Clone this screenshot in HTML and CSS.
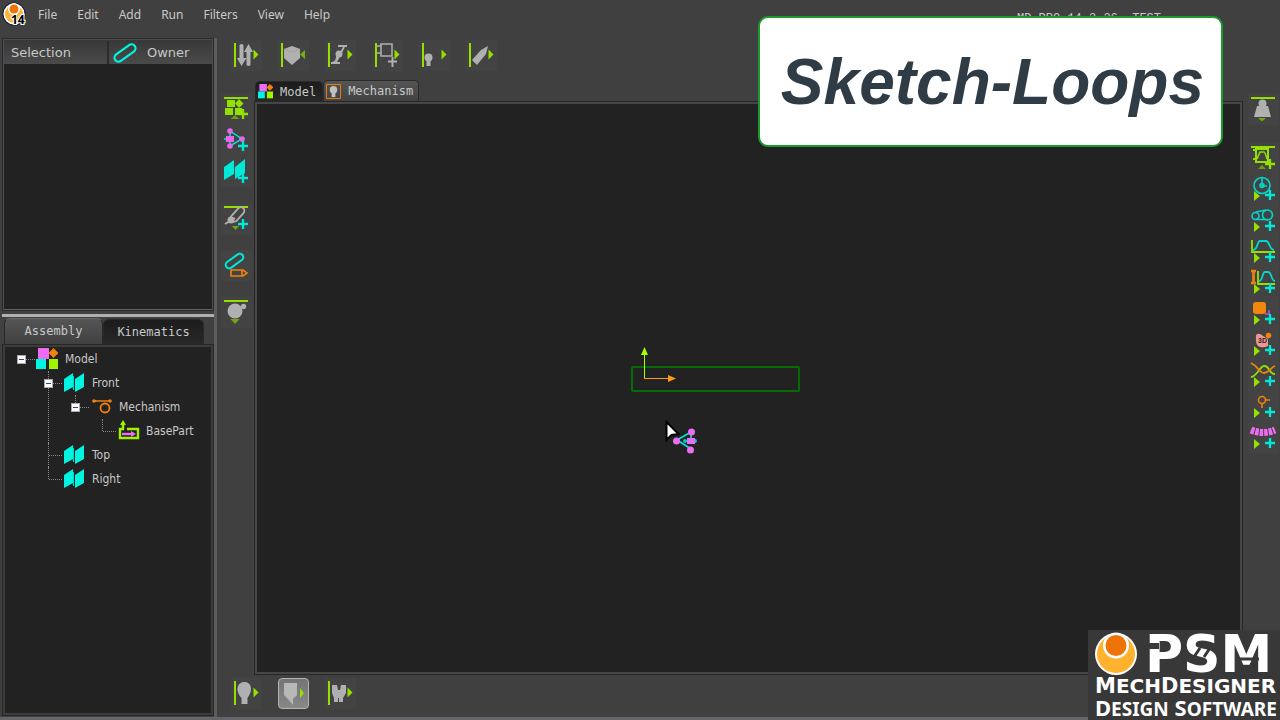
FILE: index.html
```html
<!DOCTYPE html>
<html lang="en">
<head>
<meta charset="utf-8">
<title>MechDesigner</title>
<link rel="stylesheet" href="styles.css">
</head>
<body>
<svg class="defs" aria-hidden="true">
  <symbol id="bar-v" viewBox="0 0 31 31"><path d="M3 3h2v24H3z" fill="#94e000"/></symbol>
  <symbol id="bar-h" viewBox="0 0 31 31"><path d="M3 3h24v2H3z" fill="#94e000"/></symbol>
  <symbol id="go" viewBox="0 0 31 31"><path d="M22.500 9.500l5 5-5 5z" fill="#94e000"/></symbol>
  <symbol id="play" viewBox="0 0 31 31"><path d="M6 17l6 5-6 5z" fill="#94e000"/></symbol>
  <symbol id="plus" viewBox="0 0 31 31"><path d="M22 18v10M17 23h10" fill="none" stroke="currentColor" stroke-width="2.300"/></symbol>
  <symbol id="plane" viewBox="0 0 22 22"><path d="M1 7L10 1v14L1 20zM12 7l9-6v14l-9 5z" fill="#00f5e0"/><path d="M10.500 4v14" stroke="#00d8c8"/></symbol>
  <symbol id="model" viewBox="0 0 22 22"><path d="M2 0h11v11H2z" fill="#ee6cf2"/><path d="M17.500 0l5 5-5 5-5-5z" fill="#ef820d"/><path d="M0 11h10v10H0z" fill="#00f5e0"/><path d="M13 11h9v10h-9z" fill="#9ff500"/></symbol>
</svg>

<header class="menubar">
  <svg class="app-icon" viewBox="0 0 24 24" role="img" aria-label="MechDesigner 14">
    <circle cx="12" cy="12" r="11.500" fill="#1b1b35"/><circle cx="12" cy="12" r="10.500" fill="#fff"/><circle cx="12" cy="12" r="9" fill="#fdb338"/><circle cx="12" cy="7" r="6" fill="#fff"/><circle cx="12" cy="7" r="4.500" fill="#ee7408"/>
    <text class="app-version" x="9" y="22">14</text>
  </svg>
  <nav class="menu">
    <button>File</button><button>Edit</button><button>Add</button><button>Run</button><button>Filters</button><button>View</button><button>Help</button>
  </nav>
  <span class="app-title">MD PRO 14.3.26&nbsp; TEST</span>
</header>

<main class="shell">
  <aside class="sidebar">
    <section class="selection">
      <div class="selection-head">
        <span class="head-cell">Selection</span>
        <span class="head-cell owner"><svg class="owner-icon" viewBox="0 0 24 20"><rect x="0" y="6" width="24" height="8" rx="4" transform="rotate(-36 12 10)" fill="none" stroke="#00f5e0" stroke-width="2.200"/></svg>Owner</span>
      </div>
    </section>
    <div class="h-splitter"></div>
    <div class="side-tabs"><button class="side-tab active">Assembly</button><button class="side-tab">Kinematics</button></div>
    <section class="tree-panel">
      <ul class="tree">
        <li><div class="node"><button class="toggle" aria-label="Collapse Model"></button><svg class="node-icon"><use href="#model"/></svg>Model</div>
          <ul>
            <li><div class="node"><button class="toggle" aria-label="Collapse Front"></button><svg class="node-icon"><use href="#plane"/></svg>Front</div>
              <ul>
                <li><div class="node"><button class="toggle" aria-label="Collapse Mechanism"></button><svg class="node-icon" viewBox="0 0 22 22"><path d="M4 5h16" stroke="#ef820d" stroke-width="1.500"/><circle cx="4" cy="5" r="1.800" fill="#ef820d"/><circle cx="20" cy="5" r="1.800" fill="#ef820d"/><circle cx="15" cy="12" r="4.500" fill="none" stroke="#ef820d" stroke-width="1.800"/></svg>Mechanism</div>
                  <ul>
                    <li><div class="node"><svg class="node-icon" viewBox="0 0 22 22"><path d="M7 9H3v9h18V9H10M6 10V4" fill="none" stroke="#9ff500" stroke-width="2.400"/><path d="M6 0l3 5H3z" fill="#9ff500"/><path d="M5 14h12" stroke="#ee6cf2" stroke-width="2.400"/><path d="M14 11l5 3-5 3z" fill="#ee6cf2"/></svg>BasePart</div></li>
                  </ul>
                </li>
              </ul>
            </li>
            <li><div class="node"><svg class="node-icon"><use href="#plane"/></svg>Top</div></li>
            <li><div class="node"><svg class="node-icon"><use href="#plane"/></svg>Right</div></li>
          </ul>
        </li>
      </ul>
    </section>
  </aside>
  <div class="v-splitter"></div>

  <section class="workspace">
    <div class="toolbar">
      <button class="tool" aria-label="Sort"><svg viewBox="0 0 31 31"><use href="#bar-v"/><use href="#go"/><g fill="#b0b0b0"><path d="M8.500 5q2-2 4 0v13h3L10.500 26 6 18h2.500zM15.500 25V12H13l4.500-8 4.500 8h-2.500v13q-2 2-4 0z"/></g></svg></button>
      <button class="tool" aria-label="View"><svg viewBox="0 0 31 31"><use href="#bar-v"/><path d="M6 9l8-3 8 3v9l-8 7-8-7z" fill="#b0b0b0"/><path d="M6 9l8 3 8-3" fill="none" stroke="#a4a4a4"/><path d="M27 10l-5 4.500 5 4.500z" fill="#70b010"/></svg></button>
      <button class="tool" aria-label="Motion"><svg viewBox="0 0 31 31"><use href="#bar-v"/><use href="#go"/><path d="M6 23h9M13 6h9M11 22l8-15M7 23q5-1 5-7" fill="none" stroke="#b0b0b0" stroke-width="1.800"/><circle cx="14" cy="14" r="3.500" fill="#b0b0b0"/></svg></button>
      <button class="tool" aria-label="Add frame"><svg viewBox="0 0 31 31"><use href="#bar-v"/><use href="#go"/><path d="M9 4h11v12H9zM5 6h4M5 13h4" fill="none" stroke="#b0b0b0" stroke-width="1.500"/><path d="M20.500 17v10M16 21.500h9" stroke="#b0b0b0" stroke-width="2"/></svg></button>
      <button class="tool" aria-label="Part display"><svg viewBox="0 0 31 31"><use href="#bar-v"/><use href="#go"/><circle cx="9.500" cy="17.500" r="4" fill="#b0b0b0"/><path d="M7.500 18h4v8h-4z" fill="#b0b0b0"/></svg></button>
      <button class="tool" aria-label="Pen"><svg viewBox="0 0 31 31"><use href="#bar-v"/><use href="#go"/><path d="M6 20L15 10l7-4-2 8L11 25z" fill="#b0b0b0"/></svg></button>
    </div>

    <div class="stage">
      <div class="tool-column left">
        <div class="tool-group">
          <button class="tool" aria-label="Add model"><svg viewBox="0 0 31 31" class="lime"><use href="#bar-h"/><path d="M6 6h8v7H6zM18 5l4.500 4.500L18 14l-4-4.500zM4 14h8v7H4zM14 14h7v7h-7z" fill="#94e000"/><use href="#plus" y="-3"/><path d="M9.500 25l4.500-4 4.500 4z" fill="#6f9c14"/></svg></button>
          <button class="tool" aria-label="Add sketch"><svg viewBox="0 0 31 31" class="cyan"><path d="M9 6l12 8-12 7zM3 14h9" fill="none" stroke="#00e8d8" stroke-width="1.500"/><g fill="#e868ec"><circle cx="9" cy="6" r="2.800"/><circle cx="21" cy="14" r="2.800"/><circle cx="9" cy="21" r="2.800"/><path d="M5 11h8v6H5z"/></g><use href="#plus" y="-2"/></svg></button>
          <button class="tool" aria-label="Add plane"><svg viewBox="0 0 31 31" class="cyan"><path d="M3 11L13 4v14L3 24zM14 11l10-8v14l-10 6z" fill="#00e8d8"/><use href="#plus" y="-1"/></svg></button>
        </div>
        <div class="tool-group"><button class="tool" aria-label="Add part"><svg viewBox="0 0 31 31" class="cyan"><use href="#bar-h"/><rect x="8" y="8" width="17" height="7" rx="3.500" transform="rotate(-48 16.500 11.500)" fill="none" stroke="#b0b0b0" stroke-width="1.800"/><circle cx="10" cy="17" r="3.500" fill="#b0b0b0"/><path d="M4 21l10-6" stroke="#b0b0b0" stroke-width="2"/><use href="#plus" y="-2"/><path d="M11 23h7l-3.500 4z" fill="#70a714"/></svg></button></div>
        <div class="tool-group"><button class="tool" aria-label="Edit part"><svg viewBox="0 0 31 31"><rect x="3.500" y="7.500" width="20" height="7" rx="3.500" transform="rotate(-36 13.500 11)" fill="none" stroke="#00e8d8" stroke-width="2"/><path d="M10 20h12l4 3-4 3H10zM21 20v6" fill="none" stroke="#ef820d" stroke-width="1.600"/></svg></button></div>
        <div class="tool-group"><button class="tool" aria-label="Geometry"><svg viewBox="0 0 31 31"><use href="#bar-h"/><circle cx="14" cy="14" r="7.500" fill="#b0b0b0"/><circle cx="22.500" cy="9.500" r="2.700" fill="#b0b0b0"/><path d="M9.500 22h9L14 27z" fill="#70a714"/></svg></button></div>
      </div>

      <div class="center">
        <div class="doc-tabs">
          <button class="doc-tab"><svg class="doc-icon" viewBox="0 0 22 22"><use href="#model"/></svg>Model</button>
          <button class="doc-tab active"><svg class="doc-icon" viewBox="0 0 16 16"><path d="M.5.5h15v15H.5z" fill="none" stroke="#ef820d" stroke-width="1"/><circle cx="8" cy="6" r="4" fill="#c0c0c0"/><path d="M6 8h4v6H6z" fill="#c0c0c0"/></svg>Mechanism</button>
        </div>
        <div class="canvas">
          <svg class="drawing" viewBox="0 0 176 120" role="img" aria-label="Base part sketch">
            <rect x="5" y="22" width="167" height="24" rx="1" fill="none" stroke="#056b05" stroke-width="2"/>
            <path d="M17.500 33V10" stroke="#a6ff00"/><path d="M17.500 2l3.500 8h-7z" fill="#a6ff00"/>
            <path d="M17 33.500h24" stroke="#ff9a18"/><path d="M49 33.500l-8-3.500v7z" fill="#ff9a18"/>
            <path d="M64 87l-14 8 14 9M64 88v6M57 96h12" fill="none" stroke="#00e8e0" stroke-width="1.600"/><g fill="#00c8c8"><circle cx="58" cy="96" r="2"/><circle cx="68" cy="96" r="2"/></g>
            <g fill="#ee6cf2"><circle cx="64.500" cy="87" r="3.500"/><circle cx="49.500" cy="96" r="3.500"/><circle cx="63.500" cy="105" r="3.500"/><path d="M60 93h8v6h-8z"/></g>
            <path d="M39.500 77v18l5-5 7-1z" fill="#fff" stroke="#000" stroke-width="2"/>
          </svg>
        </div>
      </div>

      <div class="tool-column right">
        <div class="tool-group"><button class="tool" aria-label="Mass"><svg viewBox="0 0 31 31"><use href="#bar-h"/><circle cx="14.500" cy="9.500" r="4" fill="#b0b0b0"/><path d="M9 12h11l3 11H6z" fill="#b0b0b0"/><path d="M10 24h8l-4 3.500z" fill="#70a714"/></svg></button></div>
        <div class="tool-group">
          <button class="tool" aria-label="Add function block"><svg viewBox="0 0 31 31" class="lime"><use href="#bar-h"/><path d="M8 6h12v13H8zM5 7h3M5 16h3" fill="none" stroke="#94e000" stroke-width="2"/><path d="M9 16q3-7 3-7h4q1 0 3 7" fill="none" stroke="#94e000" stroke-width="1.600"/><use href="#plus" y="-2"/><path d="M10 26l4-4 4 4z" fill="#6f9c14"/></svg></button>
          <button class="tool" aria-label="Add clock"><svg viewBox="0 0 31 31" class="cyan"><g fill="none" stroke="#00d8cc" stroke-width="1.600"><circle cx="14" cy="11.500" r="8"/><circle cx="14" cy="11.500" r="2"/><path d="M14 4v8h5"/></g><use href="#play"/><use href="#plus" y="-2"/></svg></button>
          <button class="tool" aria-label="Add gearing"><svg viewBox="0 0 31 31" class="cyan"><g fill="none" stroke="#00d8cc" stroke-width="1.600"><circle cx="7.500" cy="11" r="3.500"/><circle cx="19.500" cy="10" r="5"/><path d="M8 7l10-2M8 14.500h12"/></g><use href="#play"/><use href="#plus" y="-2"/></svg></button>
          <button class="tool" aria-label="Add motion"><svg viewBox="0 0 31 31" class="cyan"><path d="M4 4v12h23" fill="none" stroke="#94e000" stroke-width="1.800"/><path d="M5 14c5 0 4-9 7-9h6c4 0 3 9 8 9" fill="none" stroke="#00d8cc" stroke-width="1.800"/><use href="#play"/><use href="#plus" y="-2"/></svg></button>
          <button class="tool" aria-label="Add motion path"><svg viewBox="0 0 31 31" class="cyan"><path d="M3 4h5M3 16h5M5.500 4v12" fill="none" stroke="#ef820d" stroke-width="2.600"/><path d="M10 4v13h17" fill="none" stroke="#94e000" stroke-width="1.800"/><path d="M11 14c4 0 3-9 6-9h3c4 0 3 9 7 9" fill="none" stroke="#00d8cc" stroke-width="1.800"/><use href="#play"/><use href="#plus" y="-2"/></svg></button>
          <button class="tool" aria-label="Add cam"><svg viewBox="0 0 31 31" class="cyan"><rect x="5" y="4" width="13" height="12" rx="3" fill="#f0860c"/><path d="M17 16h4v-4" fill="none" stroke="#b35bd0" stroke-width="1.500"/><use href="#play"/><use href="#plus" y="-2"/></svg></button>
          <button class="tool" aria-label="Add 3D cam"><svg viewBox="0 0 31 31" class="cyan"><path d="M8 6q3-3 7 1l5 3v7q-4 2-8 1-5-1-4-12z" fill="#e89890"/><circle cx="20.500" cy="6.500" r="2.800" fill="#ef820d"/><text class="tiny" x="10" y="14">3D</text><use href="#play"/><use href="#plus" y="-2"/></svg></button>
          <button class="tool" aria-label="Add curves"><svg viewBox="0 0 31 31" class="cyan"><path d="M3 17C9 17 12 5 17 6s4 8 10 8" fill="none" stroke="#94e000" stroke-width="1.800"/><path d="M3 3c7 3 8 10 13 10s6-5 11-7" fill="none" stroke="#ef820d" stroke-width="1.800"/><use href="#play"/><use href="#plus" y="-2"/></svg></button>
          <button class="tool" aria-label="Add point"><svg viewBox="0 0 31 31" class="cyan"><circle cx="14" cy="9" r="3.500" fill="none" stroke="#ef820d" stroke-width="1.600"/><path d="M18 9h4M14 13v4" stroke="#ef820d" stroke-width="1.600"/><use href="#play"/><use href="#plus" y="-2"/></svg></button>
          <button class="tool" aria-label="Add polyline"><svg viewBox="0 0 31 31" class="cyan"><path d="M3 8q12 5 24 0" fill="none" stroke="#ee6cf2" stroke-width="7" stroke-dasharray="3.500 1"/><use href="#play"/><use href="#plus" y="-2"/></svg></button>
        </div>
      </div>
    </div>

    <div class="toolbar bottom">
      <button class="tool" aria-label="Part"><svg viewBox="0 0 31 31"><use href="#bar-v"/><use href="#go"/><path d="M10.500 26v-6c-7-8-4-16 3-16s9 8 3 16v6z" fill="#b0b0b0"/></svg></button>
      <button class="tool pressed" aria-label="Solid" aria-pressed="true"><svg viewBox="0 0 31 31"><path d="M21 9l4 5-4 5z" fill="#94e000"/><path d="M5 4h13v12l-4 4v6l-5-6-4-4z" fill="#b8b8b8"/></svg></button>
      <button class="tool" aria-label="Assembly"><svg viewBox="0 0 31 31"><use href="#bar-v"/><use href="#go"/><path d="M7 7h5l1 5h2l1-5h5v8l-3 5v4h-4v-4h-1v4h-4v-4l-2-5z" fill="#b0b0b0"/></svg></button>
    </div>
  </section>
</main>

<h1 class="banner">Sketch-Loops</h1>
<div class="brand">
  <div class="brand-top">
    <svg class="brand-mark" viewBox="0 0 44 44"><circle cx="21" cy="22" r="21" fill="#fff"/><circle cx="21" cy="22" r="19" fill="#ffb22e"/><circle cx="21" cy="13.500" r="13" fill="#fff"/><circle cx="21" cy="13.500" r="10.500" fill="#ee7408"/></svg>
    <span class="brand-name">PSM<svg class="brand-cuts" viewBox="0 0 128 42"><path d="M0 11h14v6H0z" fill="#383838"/><path d="M47 28l8-12M59 25l8-12M91 27h23" fill="none" stroke="#383838" stroke-width="3"/></svg></span>
  </div>
  <span class="brand-line">M<small>ech</small>D<small>esigner</small></span>
  <span class="brand-line wide">D<small>esign</small> S<small>oftware</small></span>
</div>
</body>
</html>
```
FILE: styles.css
```css
* { box-sizing: border-box; }
body {
  margin: 0;
  height: 100vh;
  display: flex;
  flex-direction: column;
  overflow: hidden;
  background: #404040;
  border-bottom: 3px solid #666468;
  color: #c8c8c8;
  font-family: "Noto Sans", sans-serif;
  font-size: 12px;
}
button { margin: 0; padding: 0; border: 0; background: none; color: inherit; font: inherit; }
svg { display: block; }
.defs { position: absolute; width: 0; height: 0; }

.menubar { display: flex; align-items: center; height: 38px; padding: 0 119px 10px 2px; }
.app-icon { width: 24px; height: 24px; overflow: visible; }
.app-version { font: bold 12px "Open Sans", sans-serif; fill: #000; stroke: #fff; stroke-width: 2px; paint-order: stroke; }
.menu { display: flex; gap: 20px; margin-left: 12px; }
.app-title { margin-left: auto; padding-top: 10px; font: 12px "Liberation Mono", monospace; }

.shell { flex: 1; display: flex; min-height: 0; }
.sidebar { display: flex; flex-direction: column; width: 214px; padding: 0 0 0 2px; }
.selection { height: 273px; border: 2px solid #4c4c4c; border-bottom-color: #606060; background: #222; outline: 1px solid #2a2a2a; outline-offset: -1px; }
.selection-head { display: flex; height: 24px; padding-top: 1px; font: 13px "DejaVu Sans", sans-serif; background: linear-gradient(#383838, #4a4a4a); }
.head-cell { display: flex; align-items: center; width: 103px; padding-left: 7px; }
.head-cell.owner { flex: 1; gap: 10px; padding-left: 4px; border-left: 2px solid #2c2c2c; }
.owner-icon { width: 24px; height: 20px; }
.h-splitter { flex: none; height: 3px; margin-top: 3px; background: #b0b0b0; }
.side-tabs { display: flex; align-items: flex-end; height: 27px; padding: 1px 0 0 2px; font: 12px "DejaVu Sans Mono", monospace; }
.side-tab { height: 25px; width: 101px; border: 1px solid #282828; border-bottom: 0; border-radius: 6px 6px 0 0; background: linear-gradient(#1c1c1c, #282828); }
.side-tab.active { width: 99px; height: 26px; padding-bottom: 2px; background: linear-gradient(#555, #404040); border-top-color: #666; }
.tree-panel { flex: 1; margin-bottom: 1px; padding-left: 12px; border: 3px solid #3c3c3c; background: #222; outline: 1px solid #262626; outline-offset: -1px; }

.tree, .tree ul { margin: 0; padding: 0; list-style: none; }
.tree ul { padding-left: 27px; }
.tree li { position: relative; }
.node { position: relative; display: flex; align-items: center; height: 24px; padding-left: 19px; gap: 7px; font-family: "DejaVu Sans Condensed", "DejaVu Sans", sans-serif; font-stretch: condensed; }
.node::before { content: ""; position: absolute; left: 5px; width: 13px; border-top: 1px dotted #888; }
.tree ul > li::before { content: ""; position: absolute; top: 0; bottom: 0; left: 4px; border-left: 1px dotted #888; }
.tree ul > li:last-child::before { bottom: auto; height: 12px; }
.toggle { position: absolute; left: 0; width: 9px; height: 9px; background: linear-gradient(#2f4a80, #2f4a80) center / 5px 1px no-repeat #fff; border: 1px solid #aaa; }
.node-icon { width: 22px; height: 22px; overflow: visible; }

.v-splitter { width: 3px; background: #5c5c5c; }
.workspace { flex: 1; display: flex; flex-direction: column; min-width: 0; }
.toolbar { display: flex; gap: 16px; padding: 2px 0 9px 14px; }
.toolbar.bottom { padding: 3px 0 8px 14px; }
.tool { flex: none; width: 31px; height: 31px; background: #434343; }
.tool svg { width: 31px; height: 31px; }
.tool.pressed { border: 1px solid #b4b4b4; border-radius: 4px; background: linear-gradient(#747474, #888); overflow: hidden; }
.stage { flex: 1; display: flex; min-height: 0; }
.tool-column { display: flex; flex-direction: column; gap: 16px; width: 37px; padding: 14px 0 0 4px; }
.tool-column.right { gap: 18px; padding-left: 5px; }
.tool-group { display: flex; flex-direction: column; }
.cyan { color: #00e8d8; }
.lime { color: #94e000; }
.tiny { font: bold 7px "Liberation Sans", sans-serif; fill: #402020; }

.center { flex: 1; display: flex; flex-direction: column; min-width: 0; }
.doc-tabs { display: flex; align-items: flex-end; height: 21px; padding-left: 1px; font: 12px "DejaVu Sans Mono", monospace; }
.doc-tab { display: flex; align-items: center; gap: 7px; height: 20px; padding: 0 6px 0 2px; border: 1px solid #2a2a2a; border-bottom: 0; border-radius: 5px 5px 0 0; background: linear-gradient(#1c1c1c, #282828); }
.doc-tab.active { height: 21px; padding: 0 5px 0 2px; background: linear-gradient(#555, #424242); }
.doc-icon { width: 15px; height: 15px; overflow: visible; }
.canvas { position: relative; flex: 1; border: 1px solid #272727; background: #222; box-shadow: inset 0 0 0 2px #464646; }
.drawing { position: absolute; left: 372px; top: 243px; width: 176px; height: 120px; }

.banner { position: absolute; top: 16px; right: 57px; margin: 0; padding: 29px 17px 28px 21px; border: 2px solid #1c9a2c; border-radius: 10px; background: #fff; color: #2f3b45; font: italic bold 64px/70px "Liberation Sans", sans-serif; }
.brand { position: absolute; right: 0; bottom: 0; width: 192px; height: 90px; padding: 2px 0 0 7px; background: #383838; color: #fff; }
.brand-top { display: flex; align-items: center; gap: 6px; height: 44px; }
.brand-mark { flex: none; width: 44px; height: 44px; }
.brand-name { position: relative; font: bold 52px/44px "DejaVu Sans", sans-serif; }
.brand-cuts { position: absolute; left: 0; top: 0; width: 128px; height: 42px; }
.brand-line { display: block; font: bold 21px/21px "DejaVu Sans", sans-serif; text-transform: uppercase; white-space: nowrap; }
.brand-line small { font-size: 20px; }
.brand-line.wide { font-family: "Noto Sans", sans-serif; font-size: 22px; }
.brand-line.wide small { font-size: 19px; }
```
